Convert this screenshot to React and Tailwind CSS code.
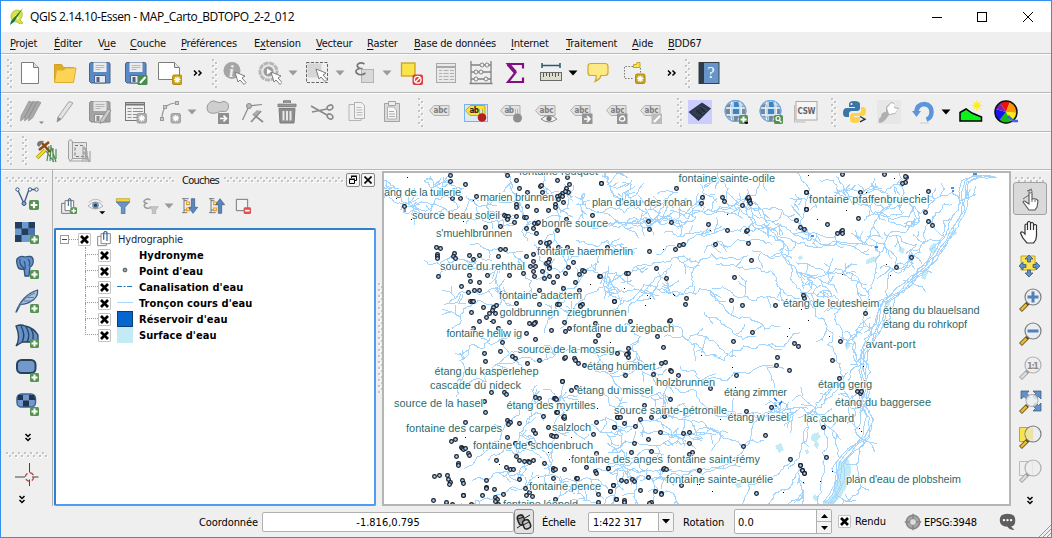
import React from "react";

/* ---------- map data ---------- */

// Spring and water-point positions, stored per survey tile at three units per pixel.
const TILES = [
  { x: 380, y: 168, p: [210,21,212,39,255,50,383,23,410,36,480,56,485,52,417,60,443,74,288,84,218,92,240,92,531,36,561,28,567,50,560,60,663,47,488,73,548,76,566,72,556,70,532,84,540,82,535,94,546,86,549,102,72,114,410,110,410,119,441,114,470,126,504,126,526,110,526,119,636,141,372,141,379,146,385,146,383,153,410,146,432,147,438,147,404,164,360,174,315,177,462,165,471,165,474,162,438,180,459,180,470,195,531,186,558,154,480,222,500,225,507,222,168,237,180,240,171,258,171,264,171,271,222,255,220,264,225,272,267,261,297,261,281,273,361,243,377,243,354,264,438,264,459,258,450,294,461,279,465,294,459,309,462,324,486,309,500,287,508,274,506,284,507,298,507,302,504,238,536,237,563,237,564,297,579,282,555,315,597,318,606,306,613,309,681,237,174,324,267,321,321,321,270,339,297,342,387,321,429,315,243,354,264,372,282,366,297,366,492,330,507,324,531,324,519,342,477,366,549,360,585,342,597,366,657,324,660,324,270,399,276,401,281,399,408,406,477,408,531,408,537,408,602,411,606,410,600,416,702,399,309,417,348,411,339,417,336,426,345,435,327,435,318,447,273,432,297,459,339,459,354,480,387,462,447,465,459,470,465,463,462,465,552,462,513,486,555,490,567,480,645,465,654,501,438,495,279,480] },
  { x: 600, y: 168, p: [3,47,228,60,306,87,303,105,366,87,372,99,426,111,441,91,447,94,444,87,449,99,452,107,144,159,213,162,147,183,324,168,381,186,438,189,441,186,588,156,600,177,612,183,618,72,618,123,345,228,225,243,237,231,249,228,147,249,444,225,453,276,168,300,198,330,402,327,78,315,84,315,42,399,258,390,255,408,393,396,426,411,525,411,609,381,612,392,90,459,208,459,210,456,171,504,456,492] },
  { x: 800, y: 168, p: [126,18,252,18,318,28,316,25,315,42,306,45,384,69,18,72,180,72,18,123,375,132,384,159,396,171,174,150,81,168,111,195,123,189,126,186,128,195,333,267,288,297,195,435] },
  { x: 380, y: 338, p: [366,12,312,45,360,39,315,69,397,54,405,60,441,77,477,66,465,3,645,9,552,60,555,57,583,60,587,66,594,75,613,81,546,131,548,131,573,156,588,147,333,162,372,162,380,168,465,177,477,180,522,180,527,182,530,184,312,189,315,222,530,222,531,222,489,234,551,238,554,242,552,235,255,252,381,246,387,252,392,252,384,260,417,255,504,267,461,276,465,285,515,292,519,294,528,294,381,297,648,252,702,267,639,288,213,309,225,303,243,327,246,330,249,333,255,330,264,345,269,351,405,315,450,315,228,354,408,354,348,366,417,366,432,369,444,369,459,366,447,372,492,375,648,345,234,375,234,381,378,387,392,393,399,393,519,390,519,396,525,393,552,393,618,387,645,399,648,405,684,390,162,414,177,411,201,411,204,423,212,432,207,438,246,426,249,435,318,426,320,447,318,450,342,453,417,423,519,420,588,420,591,420,699,441,690,459,249,471,250,472,306,471,369,468,435,450,447,462,438,471,456,474,345,477,351,483,345,489,354,498,159,486,198,492,216,498,273,498,525,483,654,468,654,492,708,483,711,237] },
  { x: 600, y: 338, p: [84,30,84,45,82,50,84,58,78,48,189,27,51,45,183,75,195,72,210,96,213,101,234,111,75,111,159,108,399,9,582,15,594,24,531,57,528,81,567,96,408,111,330,150,210,183,132,201,438,219,513,207,51,237,60,237,120,243,153,237,192,234,72,255,42,267,105,264,180,282,249,285,267,282,144,303,102,315,267,315,495,291,429,324,93,342,153,339,276,342,267,348,24,390,190,393,194,392,198,393,297,396,144,417,63,426,78,429,98,424,102,429,39,441,30,459,120,456,165,459,183,466,185,470,243,441,468,465,570,363,600,381,606,396,612,405,48,483,72,486,72,493,153,492,148,495] },
  { x: 800, y: 338, p: [120,9,96,66,117,120,172,160,180,165,183,160,69,267,78,357,0,381,6,396,12,405] },
];

const SPECKS = [407,177,396,198,473,200,411,219,484,226,489,219,463,221,550,209,648,229,663,249,710,230,727,214,808,175,866,192,894,178,919,194,846,210,817,219,590,284,624,288,647,295,673,294,674,295,645,305,650,298,801,309,808,320,829,336,789,328,787,336,842,274,886,264,890,275,863,366,859,428,861,431,832,471,712,491,820,481,701,355,732,367,735,387,750,422,720,419,626,367,590,389,597,408,571,437,548,452,499,464,538,477,465,437,513,401,610,342,803,482,783,492,697,484,699,484,569,459,490,321,498,330];

const LABELS = [
  ["fontaine rouquet",519,175,79],["ang de la tuilerie",384,196,77],["marien brunnen",480,200.5,74],["plan d'eau des rohan",592,205.5,100],
  ["source beau soleil",412,219,88],["bonne source",541.5,227,66.5],["s'muehlbrunnen",436,236.5,76],["fontaine haemmerlin",537,255,96],
  ["source du rehthal",440,270,85],["fontaine adactem",499,299,83],["goldbrunnen",499.5,316,59.5],["ziegbrunnen",567,316,59.5],
  ["fontaine du ziegbach",573,331.5,101],["fontaine hellw ig",446.5,337,75.5],["fontaine sainte-odile",678.5,181.5,96.5],
  ["fontaine pfaffenbruechel",809,202.5,120.5],["étang de leutesheim",783,307,96.5],["étang du blauelsand",883,313.5,96.5],
  ["étang du rohrkopf",883,328,84],["avant-port",865.5,347.5,50],["source de la mossig",517.5,352.5,97],["étang humbert",587,369.5,68.5],
  ["étang du kasperlehep",434.5,374.5,104],["cascade du nideck",430,388.5,91],["étang du missel",577,394,76],["source de la hasel",394,406.5,89],
  ["étang des myrtilles",506.5,409,89],["source sainte-pétronille",614,413.5,113],["holzbrunnen",656,386,59],["étang zimmer",724,396,63],
  ["étang w iesel",727.5,420.5,61.5],["lac achard",804,421.5,50],["étang gerig",818,387.5,54],["étang du baggersee",835,406,96],
  ["plan d'eau de plobsheim",846,482.5,115],["fontaine des carpes",406,432,96],["salzloch",552,431,39],["fontaine de schoenbruch",473,449,120],
  ["fontaine des anges",571,463,92],["fontaine saint-rémy",667,463,93],["fontaine sainte-aurélie",666,482.5,107],["fontaine pence",529,489.5,72],
  ["fontaine léopold",503,507.5,75],
];

// Number of tributaries followed by the course, at 2.5 units per pixel from the map's corner.
const STREAMS = [
  [4,0,62,30,75,55,85,90,75,120,85,150,60,170,45,200,40],
  [4,0,20,25,35,45,60,50,100],
  [4,50,100,90,105,130,100,170,95,190,85],
  [3,100,20,140,40,165,30,200,40],
  [4,205,60,230,80,260,90,300,100,330,110],
  [4,205,130,240,110,280,120,300,140],
  [4,300,0,320,30,335,60,345,100,350,140,360,170],
  [4,410,0,400,40,430,70,440,110,430,140,420,175],
  [4,450,30,470,60,460,90,440,100],
  [4,550,0,560,30,575,60,600,75],
  [4,620,20,600,50,620,70,660,70],
  [5,480,80,520,95,560,90,600,100,640,85],
  [5,520,140,560,128,600,130,640,120,690,125,720,118,760,115,800,100,850,92,905,90],
  [5,530,135,580,120,620,125,670,130,700,115,750,105,790,95],
  [4,600,135,640,132,670,118,700,110,740,120,780,108],
  [3,560,132,620,114,660,122,700,130,760,118],
  [3,735,50,700,70,690,100,680,120],
  [3,790,30,800,60,795,95],
  [3,800,100,840,85,880,95,905,85],
  [3,835,0,860,40,850,75,880,90],
  [3,960,0,940,30,910,60,905,90],
  [4,905,90,950,90,1000,105,1040,130,1100,160,1150,180,1200,180,1240,200],
  [4,905,90,930,130,970,140,1010,165,1050,175,1110,180,1150,185],
  [4,920,100,960,120,1000,135,1040,160,1080,170,1200,175],
  [4,910,110,950,150,980,170,1010,190,1020,240,1045,300,1080,360,1120,400],
  [2,950,130,1000,180,1030,240,1050,290],
  [2,100,220,150,220,200,218,215,225,270,220],
  [3,140,255,180,235,220,240,280,235,290,250],
  [4,215,180,250,190,300,195,340,215,350,250,370,300],
  [4,150,330,190,300,230,300,270,290,310,300],
  [4,170,390,200,340,240,320,290,330,320,300],
  [5,180,560,200,500,190,470,220,430,250,440,270,400],
  [4,375,180,400,230,440,250,470,210,500,190],
  [4,400,400,430,340,440,300,470,290,500,250],
  [4,440,390,480,330,520,300,560,290,600,300],
  [4,500,240,540,260,580,250,620,270],
  [3,480,170,520,180,560,170,600,180],
  [5,560,350,600,320,650,280,680,290,720,300],
  [4,590,260,630,235,690,225,740,210,800,215],
  [3,610,350,640,310,680,290,730,310,760,290,770,250,790,220,850,215,900,210],
  [4,560,310,600,300,650,300,690,260,720,230],
  [3,680,205,740,185,800,160,850,140,900,135,950,140],
  [2,700,150,740,160,800,150],
  [2,800,200,860,185,910,175,970,180],
  [2,920,195,980,210,1020,215],
  [2,830,230,880,235,940,240,980,270,1000,300,1040,315],
  [2,820,290,870,300,930,320,990,320],
  [4,750,300,790,290,830,320,860,350,920,370,990,385],
  [3,720,380,760,420,800,450,850,470,920,440,1000,435,1040,400],
  [2,800,350,840,370,870,400,930,410],
  [3,700,410,760,420,840,440,880,460],
  [2,740,485,780,500,800,520,840,515,880,500,1000,490],
  [2,690,520,730,540,780,545,820,590,880,600],
  [4,700,600,760,595,820,600,900,605,970,590,1010,600,1070,605,1120,590],
  [4,960,600,985,575,1010,590,1030,600,1000,605],
  [3,640,650,720,660,780,650,850,665,900,690,950,670],
  [4,700,610,760,620,810,640,860,650],
  [3,690,655,740,665,800,655,850,660],
  [3,580,690,640,680,720,680,780,690],
  [4,530,740,600,745,650,760,700,765,760,755,830,740,870,720,900,690,920,640,960,600,1000,590],
  [3,560,730,620,725,680,745,740,745,800,740,850,735],
  [4,580,745,600,735,640,750,660,740],
  [2,600,750,580,790,575,830],
  [2,640,760,625,810,620,860],
  [2,670,770,700,800,740,830],
  [4,540,620,600,640,650,620,700,640],
  [4,460,640,520,630,560,650,620,640],
  [3,560,700,620,715,700,705],
  [4,380,470,430,450,500,440,540,460,600,450],
  [3,600,380,640,410,620,440,640,470,600,480],
  [4,250,540,280,480,330,470,360,500],
  [4,500,480,540,500,600,500,680,490,700,470],
  [4,390,590,440,560,500,550,560,560,600,590],
  [3,620,540,650,560,690,550,720,570],
  [4,200,740,260,680,310,620,350,580,390,560],
  [4,330,700,340,650,380,600,400,620],
  [5,400,740,420,690,430,640,450,600,430,560],
  [3,260,720,300,690,340,700,400,680],
  [5,90,960,140,940,190,950,230,930,280,940,330,910],
  [4,95,995,150,980,200,985,260,970,300,990],
  [5,150,890,190,870,240,860,300,870,350,860,410,865,470,880],
  [5,200,1000,240,940,260,900,280,870],
  [5,330,1000,350,940,370,900,400,860,430,820,440,760],
  [4,180,830,230,820,300,800,360,780,400,760],
  [4,220,770,280,750,310,750,340,770],
  [4,430,1000,450,950,480,910,500,880,560,860],
  [4,520,1000,560,950,620,920,660,900,690,890],
  [4,600,960,650,950,690,970,780,1000],
  [3,480,780,500,820,540,840,600,840],
  [4,390,760,440,770,500,765,560,790],
  [3,1020,720,1000,740,950,760,900,820,850,850,820,880,800,930],
  [3,1040,740,1020,780,980,800,940,840,900,860,860,900,840,1000],
  [1,820,920,815,1000],[1,835,920,833,1000],[1,852,900,848,1000],[1,870,880,860,1000],[1,900,900,880,960,875,1000],
  [4,820,910,870,890,920,880,960,850],
  [3,1040,770,1050,800,1020,820,1000,850,1010,880,970,900,950,960,930,1000],
  [3,1000,870,980,920,985,960,960,1000],
  [3,1050,800,1040,860,1050,900,1030,950,1040,1000],
  [0,1095,610,1096,700,1093,800,1085,900,1070,1000],
  [2,1060,610,1060,660,1040,700,1010,740],
  [4,1100,620,1130,680,1120,740,1130,800,1110,860,1120,920,1100,980],
  [4,1130,750,1180,730,1190,790,1150,820,1130,870,1140,920],
  [3,1080,960,1100,930,1120,950,1110,990,1070,990],
  [1,1200,560,1180,600,1185,640,1150,620,1170,560,1200,540],
  [2,1120,400,1110,430,1130,470,1150,510,1120,560,1080,590,1060,610],
  [2,1160,500,1120,540,1090,570,1060,600],
  [2,1200,540,1190,600,1200,680,1180,730],
  [3,1240,400,1200,430,1210,480,1180,540,1190,600],
  [3,1150,400,1180,430,1200,480,1160,520],
  [3,1030,0,1060,60,1050,110,1030,145],
  [5,1090,20,1130,30,1150,60,1200,55,1250,50,1290,30],
  [5,1130,10,1150,50,1200,80,1260,110,1300,100],
  [4,1220,60,1250,90,1310,70,1340,100],
  [5,1290,0,1300,50,1270,90,1230,120,1210,160,1200,180],
  [5,1200,120,1240,100,1290,130,1330,130],
  [5,1380,40,1360,90,1330,130,1300,150,1260,160,1240,200,1230,250,1210,300,1200,360,1180,410],
  [3,1420,80,1380,100,1350,150,1340,200,1300,230,1260,280,1240,340,1200,400],
  [2,1360,60,1420,50,1440,80],
  [5,1430,100,1400,120,1390,170,1360,220,1330,260,1300,300,1270,340,1250,380],
  [4,1250,150,1290,160,1330,180,1320,230,1280,250,1240,240],
  [4,1030,225,1080,240,1130,250,1180,270,1210,300],
  [4,1040,250,1090,260,1130,240,1180,250],
  [4,1040,300,1090,310,1140,340,1180,330],
  [2,1100,300,1140,330,1130,380,1150,420],
];

const RHINE = [995,177,978,178,966,184,964,215,952,243,938,260,932,280,916,300,892,319,881,329,880,350,870,367,864,396,868,420,864,450,872,475,868,490,852,506,844,522,842,540,832,560];
const RHINE_COURSE = [995,177,978,177,967,182,964,211,953,231,943,248,927,268,913,281,897,295,885,302,882,321,876,335,866,352,864,372,868,390,864,405,872,418,868,437,853,450,842,463,840,486,828,504];

const PONDS = [
  "M838 462l10-3 3 8-1 14-8 14-8 9h-12l10-8 5-18z",
  "M930 246l4-4 3 7-4 5-4-3z", "M866 260l8-4-2 7-6 1z", "M950 232l6-2 1 4-6 2z", "M900 246l5 3-2 5-5-3z",
  "M871 258l8-2-3 6-8 1z", "M812 434l6-2 3 5-6 5-4-2z", "M775 446l6-3 3 7-5 3z", "M815 440l4 3-1 6-4-3z",
  "M845 343l4-2 1 6-4 3z", "M805 450l3-1 1 4-3 1z", "M814 494l5 4-3 4-3-3z", "M798 257l4-2 1 4-4 1z",
  "M735 484l5-2 2 5-5 1z", "M925 268l4 2-4 10-4-2z", "M886 301l6-2-3 7-4-1z", "M812 434l4 2-1 4-4-1z",
];

function random(seed) {
  let s = seed;
  return () => {
    s = (s * 1664525 + 1013904223) % 4294967296;
    return s / 4294967296;
  };
}

function meander(pts, rnd, wobble) {
  let line = pts;
  for (let pass = 0; pass < 3; pass++) {
    const next = [line[0]];
    for (let i = 1; i < line.length; i++) {
      const [ax, ay] = line[i - 1];
      const [bx, by] = line[i];
      const off = (rnd() - 0.5) * wobble;
      next.push([(ax + bx) / 2 - (by - ay) * off, (ay + by) / 2 + (bx - ax) * off], [bx, by]);
    }
    line = next;
  }
  return line;
}

const toPath = (line) => "M" + line.map(([x, y]) => x.toFixed(1) + " " + y.toFixed(1)).join("L");

const pairs = (flat) => {
  const out = [];
  for (let i = 0; i < flat.length; i += 2) out.push([flat[i], flat[i + 1]]);
  return out;
};

function branch(x, y, angle, length, rnd, depth, out) {
  const line = [[x, y]];
  let a = angle;
  let cx = x;
  let cy = y;
  const steps = Math.max(3, Math.round(length / 2.5));
  for (let i = 0; i < steps; i++) {
    a += (rnd() - 0.5) * 0.8;
    cx += Math.cos(a) * 2.5;
    cy += Math.sin(a) * 2.5;
    line.push([cx, cy]);
    if (depth > 0 && rnd() < 0.18) branch(cx, cy, a + (rnd() < 0.5 ? -0.9 : 0.9), length * 0.5, rnd, depth - 1, out);
  }
  out.push(toPath(line));
}

function buildRivers() {
  const rnd = random(67);
  const out = [];
  STREAMS.forEach(([count, ...flat]) => {
    const course = pairs(flat).map(([x, y]) => [384 + x / 2.5, 172.500 + y / 2.500]);
    const line = meander(course, rnd, 0.5);
    out.push(toPath(line));
    for (let i = 0; i < count; i++) {
      const k = 1 + Math.floor(rnd() * (line.length - 2));
      const [x, y] = line[k];
      const dir = Math.atan2(line[k + 1][1] - y, line[k + 1][0] - x);
      branch(x, y, dir + (rnd() < 0.5 ? -1.1 : 1.1), 7 + rnd() * 13, rnd, 1, out);
    }
  });
  const rhine = pairs(RHINE_COURSE);
  [-5, -2.500, 0, 1.500].forEach((shift) => {
    out.push(toPath(meander(rhine.map(([x, y]) => [x + shift, y + shift * 0.3]), rnd, 0.2)));
  });
  return out.join("");
}

const RIVERS = buildRivers();
const POINTS = TILES.flatMap((t) => pairs(t.p).map(([x, y]) => [t.x + Math.floor(x / 3) + 0.5, t.y + Math.floor(y / 3) + 0.5]));

function MapCanvas() {
  return (
    <svg className="block h-[332px] w-[626px] bg-white" viewBox="384 173 626 332">
      <g fill="#c3ebf5" shapeRendering="crispEdges">{PONDS.map((d) => <path key={d} d={d} />)}</g>
      <path d={RIVERS} fill="none" stroke="#a3d5ff" strokeWidth="1" shapeRendering="crispEdges" />
      <path d="M774 398l3 3m2 4l3-4m-7 5h2M811 236h3M951 188h3m-2 3h2M875 247h3M973 174h4M405 209v3" fill="none" stroke="#0a6ad8" strokeWidth="1.3" />
      <g fill="#000" shapeRendering="crispEdges">{pairs(SPECKS).map(([x, y], i) => <rect key={i} x={x} y={y} width="1" height="1" />)}</g>
      <g fill="#a9d4fb" stroke="#161b26" strokeWidth="1.25">{POINTS.map(([x, y], i) => <circle key={i} cx={x} cy={y} r="1.85" />)}</g>
      <g className="font-['Liberation_Sans',sans-serif] text-[11px]" fill="#2c6a6c" stroke="#fff" strokeWidth="1.6" paintOrder="stroke" strokeLinejoin="round">
        {LABELS.map(([name, x, y, w]) => <text key={name} x={x} y={y} textLength={w}>{name}</text>)}
      </g>
    </svg>
  );
}

/* ---------- small parts ---------- */

function Grip({ length, horizontal = false, className = "" }) {
  const dots = [];
  for (let p = 0; p + 2 <= length; p += 3) dots.push([p, (p / 3) % 2 ? 3 : 0]);
  const w = horizontal ? length : 6;
  const h = horizontal ? 6 : length;
  return (
    <svg className={"block shrink-0 " + className} width={w} height={h} shapeRendering="crispEdges">
      {dots.map(([p, q]) => {
        const x = horizontal ? p : q;
        const y = horizontal ? q : p;
        return (
          <g key={p}>
            <rect x={x + 1} y={y + 1} width="2" height="2" fill="#fff" />
            <rect x={x} y={y} width="1.5" height="1.5" fill="#c4c4c4" />
          </g>
        );
      })}
    </svg>
  );
}

const Icon = ({ className = "", children, size = 24 }) => (
  <svg className={"block shrink-0 " + className} width={size} height={size} viewBox="0 0 24 24" fill="none">{children}</svg>
);

const Arrow = ({ className = "", color = "#000" }) => (
  <svg className={"block shrink-0 " + className} width="10" height="6" viewBox="0 0 10 6"><path d="M0.5 0.5h9L5 5.5z" fill={color} /></svg>
);

const More = ({ className = "" }) => (
  <svg className={"block shrink-0 " + className} width="10" height="8" viewBox="0 0 10 8" fill="none" stroke="#000" strokeWidth="1.5"><path d="M1 1.500l2.500 2.500-2.500 2.500M5.500 1.500l2.500 2.500-2.500 2.500" /></svg>
);

const MoreDown = ({ className = "" }) => (
  <svg className={"block shrink-0 " + className} width="8" height="9" viewBox="0 0 8 9" fill="none" stroke="#000" strokeWidth="1.5"><path d="M1.500 1L4 3.500 6.500 1M1.500 5L4 7.500 6.500 5" /></svg>
);

const Star = ({ x, y, fill, stroke }) => (
  <g transform={`translate(${x} ${y})`}>
    <rect x="0.5" y="0.5" width="9.500" height="9.500" rx="1.500" fill={fill} stroke={stroke} />
    <path d="M5.200 2v6.500M2 5.200h6.500M3 3l4.500 4.500M7.500 3L3 7.500" stroke="#fff" strokeWidth="1.200" />
  </g>
);

const Plus = ({ x, y, s = 9 }) => (
  <g transform={`translate(${x} ${y}) scale(${s / 9})`}>
    <rect width="9" height="9" rx="1.500" fill="#589253" />
    <path d="M4.500 1.500v6M1.500 4.500h6" stroke="#fff" strokeWidth="2" />
  </g>
);

const Pointer = ({ x = 0, y = 0 }) => (
  <path transform={`translate(${x} ${y})`} d="M0 0l3 10 2-2 4 4.500 2-2-4-4.500 3-2z" fill="#fff" stroke="#7c7c7c" />
);

const Tag = ({ text = "abc", fill = "#e2e2e2", stroke = "#b0b0b0", color = "#7c7c7c" }) => (
  <>
    <path d="M6 5.500h15v10H6L1.500 10.500z" fill={fill} stroke={stroke} />
    <text x="5.500" y="12.500" fill={color} className="font-['DejaVu_Sans_Condensed','DejaVu_Sans',sans-serif] text-[8px] font-bold" textLength={text.length * 4.7}>{text}</text>
  </>
);

const Disk = ({ body, label, edge }) => (
  <>
    <path d="M2.500 1.500h18q1.500 0 1.500 1.500v19h-19l-1.500-1.500V2.500z" fill={body} stroke={edge} />
    <path d="M5.500 1.500h13V11h-13z" fill={label} />
    <path d="M7.500 4.500h9M7.500 6.500h9M7.500 8.500h5" stroke="#aaa" strokeWidth=".8" />
    <path d="M6.500 14.500h11V22h-11z" fill="#e8e8e8" stroke={edge} />
    <path d="M8.500 16h3v5h-3z" fill={edge} />
  </>
);

const Globe = () => (
  <>
    <circle cx="11.500" cy="11" r="11" fill="#6ea6dc" />
    <circle cx="11.500" cy="11" r="10" fill="#b9d3ea" />
    <path d="M3 5l5-2v4H2zM10 2h4l1 5h-5zM16 4l4 3h-3zM1 9h6v5H2zM9 9h6v5H9zM17 9h4v5h-4zM3 16h5l1 4zM10 16h5l-2 5h-3zM17 16h3l-3 4z" fill="#7b8794" />
    <path d="M10 2h4l1 5h-5zM9 9h6v5H9z" fill="#3d84c6" />
    <path d="M2 8h19M2 15h19M8 1q-3 10 0 20M16 1q3 10 0 20" stroke="#e7f1fa" strokeWidth="1.200" />
    <circle cx="11.500" cy="11" r="10.500" stroke="#6ea6dc" />
  </>
);

const Lens = ({ grey = false, children }) => (
  <>
    {children}
    <path d="M10 15L2.500 22.500" stroke={grey ? "#999" : "#5b4a17"} strokeWidth="4" />
    <path d="M8.500 16.500L3 22" stroke={grey ? "#dcdcdc" : "#eab92e"} strokeWidth="2.500" />
    <circle cx="15" cy="9" r="8" fill={grey ? "#eeeeee" : "#e9eef0"} fillOpacity="0.8" stroke={grey ? "#b0b0b0" : "#7d7d7d"} strokeWidth="1.200" />
  </>
);

/* ---------- toolbars ---------- */

function FileToolbar() {
  return (
    <div className="flex h-[39px] items-center border-t border-[#b8b8b8] shadow-[inset_0_1px_0_#fff]">
      <Grip length={29} className="ml-[6px]" />
      <Icon className="ml-[5px]"><path d="M3.500 1.500h12l5 5v16h-17z" fill="#fff" stroke="#7d7d7d" /><path d="M15.500 1.500v5h5" fill="#ddd" stroke="#7d7d7d" /></Icon>
      <Icon className="ml-[11px]"><path d="M1.500 21V3.500h7l2 3h10V10" fill="#e0ac22" stroke="#d2a022" /><path d="M1.500 21.500L3.500 9h7l2-2h10.500l-2.500 14.500z" fill="#fbd455" stroke="#dcae33" /></Icon>
      <Icon className="ml-[11px]"><Disk body="#5a8ac6" label="#ececec" edge="#49648c" /></Icon>
      <Icon className="ml-[12px]"><Disk body="#5a8ac6" label="#ececec" edge="#49648c" /><rect x="13.500" y="14" width="10" height="10" rx="1.500" fill="#4a8c4c" /><path d="M16 22l5.500-6" stroke="#fff" strokeWidth="2" /></Icon>
      <Icon className="ml-[10px]"><path d="M.5 1.500h16l5 5v12H.5z" fill="#fff" stroke="#7d7d7d" /><path d="M16.500 1.500v5h5" fill="#e4e4e4" stroke="#7d7d7d" /><Star x={14} y={13.500} fill="#cba417" stroke="#b08d0f" /></Icon>
      <More className="ml-[11px]" />
      <Grip length={29} className="ml-[9px]" />
      <Icon className="ml-[5px]"><circle cx="9" cy="9.500" r="8.500" fill="#a5a5a5" /><text x="6" y="15.500" className="font-['Liberation_Serif',serif] text-[17px] font-bold italic" fill="#eee">i</text><Pointer x={12} y={11} /></Icon>
      <Icon className="ml-[11px]"><circle cx="10.500" cy="10.500" r="8.500" fill="#e2e2e2" stroke="#b5b5b5" strokeWidth="3" strokeDasharray="5 .8" /><circle cx="10.500" cy="10.500" r="7" fill="#e6e6e6" /><circle cx="10.500" cy="10.500" r="5" fill="#9c9c9c" /><path d="M9 7.500l5 3-5 3z" fill="#fff" /><Pointer x={13} y={11} /></Icon>
      <Arrow className="ml-[6px]" color="#9a9a9a" />
      <Icon className="ml-[7px]"><rect x="2.500" y="2.500" width="14" height="14" fill="#d6d6d6" /><rect x="1.500" y="1.500" width="21" height="20" stroke="#666" strokeDasharray="3 1.500" /><Pointer x={11} y={8} /></Icon>
      <Arrow className="ml-[6px]" color="#9a9a9a" />
      <Icon className="ml-[8px]"><rect x="8.500" y="8.500" width="12" height="13" fill="#d9d9d9" stroke="#b3b3b3" /><path d="M11.500 3Q8 .8 5 3q-2 2 1.500 4.500Q1.500 9 3.500 12q4 3.500 9 0M6.500 7.500h3" stroke="#777" strokeWidth="1.700" /></Icon>
      <Arrow className="ml-[5px]" color="#9a9a9a" />
      <Icon className="ml-[8px]"><rect x="1.500" y="2" width="13.500" height="13" fill="#fbe34c" stroke="#c6a51c" strokeWidth="1.300" /><rect x="12.500" y="13.500" width="10.500" height="10.500" rx="2" fill="#dd3c3c" /><circle cx="17.700" cy="18.700" r="3.300" stroke="#fff" strokeWidth="1.300" /><path d="M15.500 21l4.500-4.500" stroke="#fff" strokeWidth="1.300" /></Icon>
      <Icon className="ml-[10px]"><rect x="2.500" y="2.500" width="19" height="19" fill="#e9e9e9" stroke="#a8a8a8" /><path d="M3 5h18v2H3z" fill="#a8a8a8" /><path d="M5 9.500h3M9.500 9.500h5M16 9.500h4M5 12.500h3M9.500 12.500h5M16 12.500h4M5 15.500h3M9.500 15.500h5M16 15.500h4M5 18.500h3M9.500 18.500h5M16 18.500h4" stroke="#b1b1b1" /></Icon>
      <Icon className="ml-[11px]"><path d="M2 0v22M22 0v22M2 4h20M2 11h20M2 18h20M.5 22.500h23" stroke="#828282" strokeWidth="1.300" /><g fill="#efefef" stroke="#828282"><circle cx="13" cy="4" r="2" /><circle cx="18" cy="4" r="2" /><circle cx="7" cy="11" r="2" /><circle cx="12" cy="11" r="2" /><circle cx="7" cy="18" r="2" /><circle cx="17" cy="18" r="2" /></g></Icon>
      <Icon className="ml-[10px]"><path d="M20 7.500V3H5l7.500 8.500L5 21h15v-4.500" stroke="#840f84" strokeWidth="2.200" /><path d="M5 3l7.500 8.500" stroke="#840f84" strokeWidth="3.500" /></Icon>
      <Icon className="ml-[12px]"><path d="M3 4.500h18M3 2v5M21 2v5" stroke="#2b5878" strokeWidth="1.500" /><rect x="1.500" y="11.500" width="21" height="8" fill="#dcdccf" stroke="#696969" /><path d="M4.500 12v4M7.500 12v3M10.500 12v4M13.500 12v3M16.500 12v4M19.500 12v3" stroke="#555" /></Icon>
      <Arrow className="ml-[5px]" />
      <Icon className="ml-[8px]"><path d="M5 2.500h14q3 0 3 3v6q0 3-3 3h-4q-1 4-6 6 2-3 1-6H5q-3 0-3-3v-6q0-3 3-3z" fill="#fdea85" stroke="#cca830" strokeWidth="1.200" /></Icon>
      <Icon className="ml-[13px]"><path d="M10 5.500H1.500v12H11M17.500 7v6" stroke="#777" strokeDasharray="1.500 1.500" /><path d="M10.500 3.500h3l.5-2h3v5h-6.500z" fill="#fbe34c" stroke="#c6a51c" /><Star x={12} y={12.500} fill="#cba417" stroke="#b08d0f" /></Icon>
      <More className="ml-[20px]" />
      <Grip length={29} className="ml-[8px]" />
      <Icon className="ml-[6px]"><rect x="2" y="1.500" width="20" height="21" fill="#6795c9" stroke="#38424c" /><rect x="2" y="1.500" width="5" height="21" fill="#2d3c4a" /><text x="10.500" y="17" fill="#fff" className="font-['Liberation_Serif',serif] text-[16px]">?</text></Icon>
    </div>
  );
}

function EditToolbar() {
  return (
    <div className="flex h-[39px] items-center border-t border-[#b8b8b8] shadow-[inset_0_1px_0_#fff]">
      <Grip length={29} className="ml-[6px]" />
      <Icon className="ml-[7px]"><path d="M9 1l4 1.500L4.500 18 .5 21l.5-5zM13 1l4 1.500L8.500 18 4.500 21l.5-5zM17 1l4 1.500L12.500 18 8.500 21l.5-5z" fill="#a9a9a9" stroke="#8c8c8c" strokeWidth=".6" /><path d="M19 21.500h5l-2.500 2.500z" fill="#888" /></Icon>
      <Icon className="ml-[9px]"><path d="M16 1.500l4 1.500L8.500 19 4 22l1-5z" fill="#e2e2e2" stroke="#a5a5a5" /><path d="M4 22l1-5 3.500 2z" fill="#8d8d8d" /></Icon>
      <Icon className="ml-[11px]"><Disk body="#a3a3a3" label="#e5e5e5" edge="#8e8e8e" /><path d="M20 9l3 1.500-7 11-4 2 1-4z" fill="#c9c9c9" stroke="#888" strokeWidth=".8" /></Icon>
      <Icon className="ml-[12px]"><rect x="1.500" y="2.500" width="19" height="18" fill="#efefef" stroke="#777" /><path d="M2 4.500h18" stroke="#777" strokeWidth="2" /><path d="M3.500 8.500h4M9 8.500h10M3.500 11.500h4M9 11.500h10M3.500 14.500h4M9 14.500h10M3.500 17.500h4M9 17.500h10" stroke="#909090" /><Star x={12.500} y={13} fill="#acacac" stroke="#a0a0a0" /></Icon>
      <Icon className="ml-[10px]"><path d="M4 19Q4 3 19 3" stroke="#999" strokeWidth="1.200" /><g fill="#ccc" stroke="#999"><rect x="2.500" y="17.500" width="3" height="3" /><rect x="5.500" y="5.500" width="3" height="3" /><rect x="17.500" y="1.500" width="3" height="3" /></g><Star x={12.500} y={13} fill="#acacac" stroke="#a0a0a0" /></Icon>
      <Arrow className="ml-[5px]" color="#9a9a9a" />
      <Icon className="ml-[9px]"><path d="M5 1.500q3-1.500 6 .5 3 1.500 6-.5 5 0 5.500 4 0 6-4 6-4-1-7 1-6 2-9.500-1-3-6 3-10z" fill="#cecece" stroke="#999" /><rect x="12" y="13" width="11" height="11" fill="#8f8f8f" /><path d="M14 18.500h6M17.500 15.500l3 3-3 3" stroke="#fff" strokeWidth="1.700" /></Icon>
      <Icon className="ml-[11px]"><path d="M1.500 20L8 6l13-1.500" stroke="#888" strokeWidth="1.200" /><circle cx="8" cy="6" r="2.500" fill="#b9b9b9" stroke="#888" /><path d="M12 14l10 8M20 11L10 22" stroke="#8c8c8c" strokeWidth="1.800" /><path d="M12 14l4-4 3 1-5 5z" fill="#aaa" /></Icon>
      <Icon className="ml-[10px]"><path d="M8.500 3V.8h7V3M3 4.200h18v2.500H3z" fill="#9b9b9b" stroke="#7c7c7c" /><path d="M4 8.500h16l-1 14.500H5z" fill="#8d8d8d" stroke="#7c7c7c" /><path d="M8.500 11v9.500M12 11v9.500M15.500 11v9.500" stroke="#e9e9e9" strokeWidth="2" /></Icon>
      <Icon className="ml-[11px]"><path d="M1 6l16 9M2 12l15-3" stroke="#8a8a8a" strokeWidth="1.700" /><ellipse cx="20" cy="7.500" rx="3" ry="2.300" stroke="#8a8a8a" strokeWidth="1.600" transform="rotate(-25 20 7.500)" /><ellipse cx="20" cy="16.500" rx="3" ry="2.300" stroke="#8a8a8a" strokeWidth="1.600" transform="rotate(35 20 16.500)" /></Icon>
      <Icon className="ml-[11px]"><path d="M4 4.500h9l3 3v13H4z" fill="#eee" stroke="#b5b5b5" /><path d="M9.500 2.500h7l3 3v13h-10z" fill="#f2f2f2" stroke="#b0b0b0" /><path d="M11.500 7.500h5M11.500 10h6M11.500 12.500h6M11.500 15h6" stroke="#b9b9b9" /></Icon>
      <Icon className="ml-[11px]"><path d="M4.500 3.500h15v18h-15z" fill="#dadada" stroke="#a3a3a3" /><path d="M8.500 1.500h7v4h-7z" fill="#eee" stroke="#a3a3a3" /><path d="M7.500 7h6l3 3v9h-9z" fill="#f7f7f7" stroke="#b0b0b0" /><path d="M9 11.500h5M9 14h6M9 16.500h6" stroke="#aaa" /></Icon>
      <Grip length={29} className="ml-[14px]" />
      <Icon className="ml-[4px]"><Tag /></Icon>
      <Icon className="ml-[12px]"><rect x=".5" y="4.500" width="23" height="17" fill="#dceaf8" stroke="#79b3ec" /><Tag text="ab" fill="#f8e23c" stroke="#c8a615" color="#222" /><path d="M17 9v6" stroke="#777" strokeWidth="3" /><path d="M17 9v6" stroke="#fff" strokeWidth="1.500" /><circle cx="18" cy="17.500" r="4.300" fill="#b32020" /></Icon>
      <Icon className="ml-[11px]"><Tag text="ab" /><path d="M17.500 9v6" stroke="#aaa" strokeWidth="3" /><path d="M17.500 9v6" stroke="#eee" strokeWidth="1.300" /><circle cx="18.500" cy="18" r="4.500" fill="#8f8f8f" /></Icon>
      <Icon className="ml-[11px]"><Tag /><path d="M7 19q8-7 16 0-8 6-16 0z" fill="#f5f5f5" stroke="#8c8c8c" /><circle cx="15" cy="18.500" r="2.600" fill="#777" /></Icon>
      <Icon className="ml-[11px]"><Tag /><rect x="13" y="13.500" width="10.500" height="10.500" fill="#949494" /><path d="M15 19h5.500M18 16l3 3-3 3" stroke="#fff" strokeWidth="1.500" /></Icon>
      <Icon className="ml-[12px]"><Tag /><rect x="12" y="13.500" width="10.500" height="10.500" fill="#949494" /><path d="M19.500 17q-3-2-4.500 1t2 3 2.500-3-2-1" stroke="#fff" strokeWidth="1.300" /></Icon>
      <Icon className="ml-[10px]"><Tag /><rect x="12.500" y="13.500" width="10.500" height="10.500" fill="#bbb" /><path d="M15 22l6-6" stroke="#fff" strokeWidth="2" /></Icon>
      <Grip length={29} className="ml-[14px]" />
      <Icon className="ml-[5px]"><path d="M0 0h24v24H0z" fill="#ccccff" /><path d="M.5 12L14 2.500l9 6L10.500 21z" fill="#2b3648" /><path d="M5 12l8-6 6 4-8 6z" stroke="#3c4a60" /><path d="M8 10l6 5M12 7l5 5" stroke="#1a2230" /></Icon>
      <Icon className="ml-[12px]"><Globe /><Plus x={15} y={15} /><path d="M20 22h5l-2.500 2.500z" fill="#000" /></Icon>
      <Icon className="ml-[11px]"><Globe /><rect x="15" y="15" width="9" height="9" rx="1.500" fill="#589253" /><circle cx="19" cy="18.500" r="2" stroke="#fff" strokeWidth="1.200" /><path d="M20.500 20.500l2 2" stroke="#fff" strokeWidth="1.300" /></Icon>
      <Icon className="ml-[11px]"><path d="M.5 5v17h11" stroke="#bbb" /><rect x="2" y="1.500" width="21" height="18.500" fill="#f6f6f6" stroke="#aaa" /><text x="3.500" y="13.500" fill="#666" className="font-['DejaVu_Sans_Condensed','DejaVu_Sans',sans-serif] text-[8px] font-bold" textLength="18">CSW</text></Icon>
      <Grip length={29} className="ml-[13px]" />
      <Icon className="ml-[6px]"><path d="M11 1Q6 1 6 4v3h6v1H4q-4 0-4 5 0 4 3 4h3v-3q0-3 3-3h5q3 0 3-3V4q0-3-6-3z" fill="#3c76a8" /><path d="M12 23q5 0 5-3v-3h-6v-1h8q4 0 4-5 0-4-3-4h-2v3q0 3-3 3h-5q-3 0-3 3v4q0 3 5 3z" fill="#fcd34a" /><circle cx="8.500" cy="4" r="1" fill="#fff" /><path d="M17 16.500l5 2.700-5 2.700" stroke="#333" strokeWidth="1.400" /></Icon>
      <Icon className="ml-[10px]"><path d="M0 0h24v24H0z" fill="#e7e7e7" /><path d="M2 23q-1-5 2-6 0-5 5-5L9 7l5-5 3 1v4l5 1-4 6-6 1-3 4q-3 4-7 4z" fill="#b0b0b0" /><path d="M10 8l4-5 3 1v4l4 1-3 4-6 1z" fill="#fff" /></Icon>
      <Icon className="ml-[11px]"><path d="M4 13Q5 4 12.500 4q7 1 7 8 0 6-5 7.500" stroke="#5d95da" strokeWidth="4.500" /><path d="M0 11h9l-4.500 6z" fill="#5d95da" /><path d="M8 23h9" stroke="#ccc" /></Icon>
      <Arrow className="ml-[5px]" />
      <Icon className="ml-[8px]"><path d="M1 21V12.500l6-3.500 6 4 9.500 4V21z" fill="#0cf01c" stroke="#000" strokeWidth="1.500" /><circle cx="18" cy="5.500" r="3" fill="#ffee10" /><path d="M18 0v11M12.500 5.500h11M14 1.500l8 8M22 1.500l-8 8" stroke="#ffee10" /></Icon>
      <Icon className="ml-[11px]"><g transform="translate(12 12)"><path d="M0 0L-6-9A11 11 0 0 1 4-10.500z" fill="#f01010" /><path d="M0 0L4-10.500A11 11 0 0 1 11 1z" fill="#ff9800" /><path d="M0 0L11 1A11 11 0 0 1 5 10z" fill="#f7f000" /><path d="M0 0L5 10A11 11 0 0 1-7 9z" fill="#10c010" /><path d="M0 0L-7 9A11 11 0 0 1-10.500-3z" fill="#1616ee" /><path d="M0 0L-10.500-3A11 11 0 0 1-6-9z" fill="#7d1fb0" /></g><circle cx="12" cy="12" r="11" stroke="#111" strokeWidth="1.500" /><path d="M14 16l5 5h5" stroke="#3d66ee" strokeWidth="2.500" /></Icon>
    </div>
  );
}

function PluginToolbar() {
  return (
    <div className="flex h-[38px] items-center border-t border-[#b8b8b8] shadow-[inset_0_1px_0_#fff]">
      <Grip length={29} className="ml-[6px]" />
      <Grip length={29} className="ml-[9px]" />
      <Icon className="ml-[6px]"><path d="M13 22l2-15M16 22l1-16M19 23l0-14M22 23L17 8M22 20l0-10M12 12l8 11" stroke="#4c8a50" strokeWidth="1.200" /><path d="M5 11L15 3M8 4l8 9" stroke="#8b4a16" strokeWidth="2.600" /><path d="M3 6q0-5 7-4L5 8z" fill="#777" /><path d="M11 11L3 19" stroke="#a58e10" strokeWidth="3.500" /><path d="M11 11L3 19" stroke="#f0e020" strokeWidth="2.300" /></Icon>
      <Icon className="ml-[10px]"><path d="M4.500 3.500h14v16h-14z" fill="#e5e5e5" stroke="#a0a0a0" /><path d="M.5 2q3-3 4 1v17q-2 3-4 0zM1 22h14" stroke="#a0a0a0" fill="#e5e5e5" /><path d="M7 6.500h9v11H7z" stroke="#777" strokeDasharray="3 2" /><path d="M15 23V8M17 23l1-14M19 23V12M21 23l-4-14M22 23V12" stroke="#a4a4a4" strokeWidth="1.200" /></Icon>
    </div>
  );
}

/* ---------- left dock ---------- */

function LeftToolbar() {
  return (
    <div className="flex w-[52px] shrink-0 flex-col border-r border-[#b0b0b0] pl-[5px] pt-[7px]">
      <Grip length={42} horizontal />
      <div className="flex flex-col gap-[10.4px] pl-[9px] pt-[3px]">
        <Icon><path d="M2.500 3.500l6.500 14L14 3.500h7.500" stroke="#3d5a80" strokeWidth="1.300" /><g fill="#fff" stroke="#34567e"><circle cx="2.500" cy="3.500" r="1.700" /><circle cx="9" cy="17.500" r="2" fill="#7fa3cf" /><circle cx="15" cy="3.500" r="1.700" /><circle cx="21.500" cy="3.500" r="1.700" /></g><Plus x={14} y={14} s={10} /></Icon>
        <Icon><path d="M0 2h20v20H0z" fill="#6c9bd0" /><path d="M0 2h7v6.500H0zM13.500 2H20v6.500h-6.500zM6.500 8.500h7V15h-7zM0 15h6.500v7H0z" fill="#263e5e" /><path d="M13.500 8.500H20V15h-6.500z" fill="#4a76ac" /><Plus x={15} y={15} /></Icon>
        <Icon><path d="M2 4q3-4 8-2 7-2 8 2 1 6-3 8l-1 9h-4l-1-7q-5 1-6-2-2-5-1-8z" fill="#6592c8" stroke="#31527c" strokeWidth="1.300" /><path d="M5 4q-1 6 4 9M13 4q3 3 1 7M9 6q2 4 1 9" stroke="#31527c" strokeWidth="1.200" /><Plus x={15} y={15} /></Icon>
        <Icon><path d="M1 23Q7 6 22.500 1q1 7-6 11-4 3-11 3.500L1.500 23z" fill="#a9c0da" stroke="#3b5c86" strokeWidth="1.200" /><path d="M3 19Q9 8 20 4M9 12l7 0M12 8.500l7 0" stroke="#5c7ea8" /><Plus x={15} y={15} /></Icon>
        <Icon><path d="M1 2q5-2 9 0 9 2 13 9v7H8q-3 1-7 4 5-8 0-20z" fill="#6592c8" stroke="#27425f" strokeWidth="1.300" /><path d="M6 2q5 9 1 16M11 3q5 8 1 15M16 5q4 6 1 13" stroke="#27425f" strokeWidth="1.300" /><Plus x={15} y={15} /></Icon>
        <Icon><rect x="2" y="2" width="18.500" height="13" rx="4.500" fill="#7399cb" stroke="#27425f" strokeWidth="2" /><Plus x={15} y={15} /></Icon>
        <Icon><rect x="2" y="2" width="18.500" height="13" rx="4.500" fill="#7399cb" stroke="#3f6395" strokeWidth="1.500" /><path d="M3 3h5v5H2.500zM14 3h5l1.500 5H14zM8 8.500h6V14.500H8z" fill="#22354f" /><Plus x={15} y={15} /></Icon>
      </div>
      <MoreDown className="ml-[18px] mt-[17px]" />
      <Grip length={42} horizontal className="mt-[10px]" />
      <Icon className="ml-[9px] mt-[5px]"><path d="M14.500 0v10M14.500 17v6.500M0 14.500h10M17 14.500h6.500" stroke="#444" transform="translate(0 -.5)" /><circle cx="14.500" cy="14" r="4.200" stroke="#c44b4b" strokeWidth="1.500" strokeDasharray="4 2.600" /></Icon>
      <MoreDown className="ml-[12px] mt-[8px]" />
    </div>
  );
}

function Check() {
  return (
    <span className="flex h-[13px] w-[13px] shrink-0 items-center justify-center rounded-[1px] border border-[#c2c2c2] bg-white">
      <svg width="9" height="9" viewBox="0 0 9 9"><path d="M1 1l7 7M8 1L1 8" stroke="#000" strokeWidth="2.700" /></svg>
    </span>
  );
}

const LAYERS = [
  ["Hydronyme", null],
  ["Point d'eau", <circle key="s" cx="8" cy="7" r="1.900" fill="#8aa8bd" stroke="#555" />],
  ["Canalisation d'eau", <path key="s" d="M0 7.500h16" stroke="#1a78c8" strokeDasharray="5 1.500 2 1.500" />],
  ["Tronçon cours d'eau", <path key="s" d="M0 7.500h16" stroke="#a9d8fc" />],
  ["Réservoir d'eau", <rect key="s" x=".5" y=".5" width="15" height="15" fill="#0566cf" stroke="#0a3c77" />],
  ["Surface d'eau", <rect key="s" width="16" height="16" fill="#c3ebf5" />],
];

function LayersPanel() {
  return (
    <div className="flex w-[323px] shrink-0 flex-col pl-[1px]">
      <div className="flex h-[18px] items-center pt-[1px]">
        <Grip length={120} horizontal className="ml-[1px]" />
        <span className="ml-[7px] w-[42px] whitespace-nowrap pt-[2px] tracking-[-0.75px]">Couches</span>
        <Grip length={120} horizontal />
        <span className="ml-[2px] flex h-[14px] w-[14px] items-center justify-center rounded-[2px] border border-[#888] bg-[#f4f4f4]">
          <svg width="10" height="10" viewBox="0 0 10 10" fill="none" stroke="#000"><path d="M3.500 3V1.500h5v4H7M3 1h6" /><path d="M1.500 4.500h5v4h-5zM1 4h6" /></svg>
        </span>
        <span className="ml-[1px] flex h-[14px] w-[14px] items-center justify-center rounded-[2px] border border-[#888] bg-[#f4f4f4]">
          <svg width="8" height="8" viewBox="0 0 8 8" stroke="#000" strokeWidth="1.600"><path d="M.5.5l7 7M7.500.5l-7 7" /></svg>
        </span>
      </div>
      <div className="flex h-[40px] items-center pb-[5px] pl-[7px]">
        <Icon size={16}><path d="M1 8h13v15H1z" fill="#eee" stroke="#777" strokeWidth="1.500" /><path d="M6 4h13v15H6z" fill="#fff" stroke="#777" strokeWidth="1.500" /><path d="M11 12V3q2-4 4 0v11" stroke="#4b6c90" strokeWidth="1.700" /><Plus x={14} y={14} s={10} /></Icon>
        <Icon size={18} className="ml-[11px]"><path d="M0 12Q10 1 20 12q-10 8-20 0z" fill="#f5f5f5" stroke="#999" /><circle cx="10" cy="11" r="4.500" fill="#6e92b5" /><circle cx="10" cy="11" r="2" fill="#26394d" /><path d="M1 7Q10-1 19 7" stroke="#aaa" /><path d="M15 19h8l-4 4z" fill="#000" /></Icon>
        <Icon size={16} className="ml-[9px]"><path d="M2 1h20v5H2z" fill="#f6d631" stroke="#b0962a" /><path d="M2 6h20l-7 8v10H9.500V14z" fill="#6c93c4" stroke="#456a98" /></Icon>
        <Icon size={16} className="ml-[12px]"><path d="M11 3Q7 0 3 3t2 5q-5 2-2 6 4 3 9 0" stroke="#999" strokeWidth="2.300" /><path d="M10 13h13l-4 5v6h-5v-6z" fill="#c5c5c5" stroke="#aaa" /></Icon>
        <Arrow className="ml-[5px]" color="#9a9a9a" />
        <Icon size={16} className="ml-[8px]"><path d="M3 1v21M3 4h5M3 18h5M0 1h10M0 22h8" stroke="#666" strokeWidth="1.300" /><path d="M7 6h4v4H7zM7 15h4v4H7z" fill="#fff" stroke="#e49d24" strokeWidth="1.800" /><path d="M14 1h5v13h4.500L16.500 23 10 14h4z" fill="#5b86bd" stroke="#34567e" /></Icon>
        <Icon size={16} className="ml-[11px]"><path d="M3 1v21M3 4h5M3 18h5M0 1h8M0 22h10" stroke="#666" strokeWidth="1.300" /><path d="M7 6h4v4H7zM7 15h4v4H7z" fill="#fff" stroke="#e49d24" strokeWidth="1.800" /><path d="M14 23h5V10h4.500L16.500 1 10 10h4z" fill="#5b86bd" stroke="#34567e" /></Icon>
        <Icon size={16} className="ml-[10px]"><path d="M2 2h17v17H2z" fill="#f2f2f2" stroke="#777" strokeWidth="1.500" /><rect x="13" y="14" width="11" height="10" rx="2" fill="#e15050" /><path d="M15 19h7" stroke="#fff" strokeWidth="2.500" /></Icon>
      </div>
      <div className="flex h-[278px] w-[322px] flex-col rounded-[2px] border-2 border-[#4f9df2] border-l-[#2f80cd] border-t-[#2f80cd] bg-white">
        <div className="flex h-[17px] items-center pl-[4px] pt-[1px]">
          <span className="flex h-[9px] w-[9px] items-center justify-center border border-[#999] bg-white"><span className="h-px w-[5px] bg-[#444]" /></span>
          <span className="w-[9px] border-t border-dotted border-[#999]" />
          <Check />
          <Icon size={16} className="ml-[6px]"><path d="M1 8h13v14H1z" fill="#fff" stroke="#888" strokeWidth="1.500" /><path d="M6 4h14v15H6z" fill="#fff" stroke="#888" strokeWidth="1.500" /><path d="M10 13V3q3-5 5 0v12" stroke="#3f6c9c" strokeWidth="2" /></Icon>
          <span className="ml-[5px] whitespace-nowrap pt-[2px] tracking-[-0.2px] text-[#1c2340]">Hydrographie</span>
        </div>
        {LAYERS.map(([name, symbol], i) => (
          <div key={name} className="flex h-[16px] items-center pl-[29px]">
            <span className="flex h-[16px] w-[13px] flex-col">
              <span className="h-[8px] border-b border-l border-dotted border-[#999]" />
              <span className={i < LAYERS.length - 1 ? "h-[8px] border-l border-dotted border-[#999]" : "h-[8px]"} />
            </span>
            <Check />
            <svg className="ml-[6px] block shrink-0" width="16" height="16" viewBox="0 0 16 16" fill="none">{symbol}</svg>
            <span className="ml-[6px] whitespace-nowrap pt-[1px] font-bold tracking-[0.08px] text-black">{name}</span>
          </div>
        ))}
      </div>
    </div>
  );
}

/* ---------- right toolbar ---------- */

function RightToolbar() {
  return (
    <div className="flex w-[38px] shrink-0 flex-col items-center pt-[7px]">
      <Grip length={30} horizontal />
      <span className="mt-[-1px] flex h-[33px] w-[34px] shrink-0 items-center justify-center rounded-[3px] border border-[#a2a2a2] bg-[#d9d9d9]">
        <Icon><path d="M8 15l3 2V6q1.500-3 3 0v6q5-1 6 2l-1 6-2 3h-6l-6-8q1-2 3 0z" fill="#fff" stroke="#555" strokeWidth="1.100" /><path d="M9 4l5-2M5 12l6-4M14 12v3M17 12.500V15" stroke="#666" /><circle cx="12.500" cy="4.500" r="1.500" fill="#ddd" stroke="#666" /></Icon>
      </span>
      <div className="flex flex-col items-center gap-[10.100px] pt-[5px]">
        <Icon><path d="M7 14V5q1.500-2 2.500 0V10 2.500q1.500-2 3 0V10 3.500q1.500-2 3 0V10 5.500q2-2 3 0V16q0 4-3 7H9q-5-5-6.500-10 1.500-2.500 4.500 1z" fill="#fff" stroke="#333" strokeWidth="1.200" /></Icon>
        <Icon><path d="M3 2h14v14H3z" fill="#fbe34c" stroke="#c6a51c" /><path d="M11 1l4 4h-2.500V8h-3V5H7zM11 23l4-4h-2.500V16h-3v3H7zM1 12l4-4v2.500H8v3H5V16zM22 12l-4-4v2.500H15v3h3V16z" fill="#6390c6" stroke="#35577e" strokeWidth=".8" /></Icon>
        <Icon><Lens /><path d="M15 3.500v11M9.500 9h11" stroke="#5181b8" strokeWidth="3" /></Icon>
        <Icon><Lens /><path d="M9.500 9h11" stroke="#5181b8" strokeWidth="3" /></Icon>
        <Icon><Lens grey /><text x="9" y="12.500" fill="#8a8a8a" className="font-['DejaVu_Sans_Condensed','DejaVu_Sans',sans-serif] text-[9px] font-bold" textLength="12">1:1</text></Icon>
        <Icon><path d="M3 1h8L9 3.500l3 3-3 3-3-3L3 9zM23 1h-8l2.500 2.500-2.500 3 3 3 2.500-3L23 9zM23 21h-8l2.500-2.500-3-3 3-3 3 3L23 13z" fill="#6390c6" stroke="#35577e" strokeWidth=".7" /><path d="M9.500 15.500L2.500 22.500" stroke="#5b4a17" strokeWidth="4" /><path d="M8.500 16.500L3 22" stroke="#eab92e" strokeWidth="2.500" /><circle cx="14" cy="10.500" r="6" fill="#e9eef0" fillOpacity=".85" stroke="#aaa" /></Icon>
        <Icon><path d="M1.500 2.500h13v14h-13z" fill="#fbe34c" stroke="#c6a51c" /><Lens /><path d="M8.500 5.500L14.500 3v11l-4 1q-5-5-2-9.500z" fill="#eee49a" /></Icon>
        <Icon><path d="M1.500 2.500h13v14h-13z" fill="#eee" stroke="#bbb" /><Lens grey /></Icon>
      </div>
      <MoreDown className="mt-[13px]" />
    </div>
  );
}

/* ---------- status bar ---------- */

function StatusBar() {
  return (
    <div className="relative flex h-[31px] items-center pl-[198px] text-black">
      <span className="w-[62px] whitespace-nowrap pt-[2px] tracking-[-0.1px]">Coordonnée</span>
      <span className="ml-[1px] flex h-[20px] w-[252px] items-center justify-center rounded-[2px] border border-[#b0b0b0] bg-white pt-[2px]">-1.816,0.795</span>
      <span className="flex h-[25px] w-[20px] items-center justify-center rounded-[3px] border border-[#8d8d8d] bg-[#e2e2e2]">
        <svg width="16" height="18" viewBox="0 0 16 18" fill="none" stroke="#222"><rect x="2" y="2" width="6.500" height="10" rx="3" fill="#999" strokeWidth="1.500" transform="rotate(-20 5 7)" /><rect x="7" y="7" width="7" height="9" rx="3" fill="#ccc" strokeWidth="1.500" transform="rotate(-20 10 11)" /><path d="M2 6l6-2M7 12l6-3M1 15l6-4M9 5l5-3" strokeWidth="1" /></svg>
      </span>
      <span className="ml-[8px] w-[46px] pt-[2px] tracking-[-0.3px]">Échelle</span>
      <span className="flex h-[20px] w-[86px] items-center rounded-[2px] border border-[#b0b0b0] bg-white pl-[4px]">
        <span className="flex-1 whitespace-nowrap pt-[2px] tracking-[-0.2px]">1:422 317</span>
        <span className="flex h-[18px] w-[15px] items-center justify-center border-l border-[#b0b0b0] bg-[#f4f4f4]"><svg width="8" height="5"><path d="M0 0h8L4 4.500z" /></svg></span>
      </span>
      <span className="ml-[9px] w-[51px] pt-[2px] tracking-[0px]">Rotation</span>
      <span className="flex h-[25px] w-[98px] items-center rounded-[2px] border border-[#b0b0b0] bg-white pl-[3px]">
        <span className="flex-1 pt-[2px]">0.0</span>
        <span className="flex h-[23px] w-[15px] flex-col border-l border-[#b0b0b0] bg-[#f4f4f4]">
          <span className="flex flex-1 items-center justify-center border-b border-[#b0b0b0]"><svg width="7" height="4"><path d="M0 4h7L3.500 0z" /></svg></span>
          <span className="flex flex-1 items-center justify-center"><svg width="7" height="4"><path d="M0 0h7L3.500 4z" /></svg></span>
        </span>
      </span>
      <span className="ml-[6px] flex"><Check /></span>
      <span className="ml-[4px] w-[48px] pt-[1px] tracking-[-0.1px]">Rendu</span>
      <Icon size={18} className="ml-[1px]"><circle cx="12" cy="12" r="9" fill="#a7a7a7" stroke="#888" strokeWidth="2" /><circle cx="12" cy="12" r="4.500" fill="#ddd" stroke="#888" /><path d="M12 1v7M12 16v7M1 12h7M16 12h7" stroke="#888" strokeWidth="2" /></Icon>
      <span className="ml-[2px] w-[76px] pt-[2px] tracking-[-0.2px]">EPSG:3948</span>
      <Icon size={17} className="ml-[-1px]"><path d="M12 1q11 0 11 9t-6 9l5 5q-7 0-10-4.500Q1 19 1 10t11-9z" fill="#5e5e5e" /><circle cx="7" cy="10" r="1.700" fill="#fff" /><circle cx="12" cy="10" r="1.700" fill="#fff" /><circle cx="17" cy="10" r="1.700" fill="#fff" /></Icon>
      <svg className="absolute bottom-0 right-0" width="12" height="12" fill="none" stroke="#999"><path d="M0 12L12 0M4 12l8-8M8 12l4-4" /></svg>
    </div>
  );
}

/* ---------- window ---------- */

const MENUS = [
  ["w-[44px]", "", "P", "rojet"],
  ["w-[44px]", "", "É", "diter"],
  ["w-[32px]", "V", "u", "e"],
  ["w-[51px]", "", "C", "ouche"],
  ["w-[73px]", "", "P", "références"],
  ["w-[62px]", "E", "x", "tension"],
  ["w-[51px]", "", "V", "ecteur"],
  ["w-[47px]", "", "R", "aster"],
  ["w-[97px]", "", "B", "ase de données"],
  ["w-[55px]", "", "I", "nternet"],
  ["w-[66px]", "", "T", "raitement"],
  ["w-[36px]", "", "A", "ide"],
  ["w-[40px]", "", "B", "DD67"],
];

export default function App() {
  return (
    <div className="flex h-[538px] w-[1052px] flex-col overflow-hidden border border-[#3390ee] bg-[#efefef] font-['DejaVu_Sans_Condensed','DejaVu_Sans',sans-serif] text-[11px] leading-[14px] text-[#111]">
      <header className="flex h-[31px] items-center bg-white pl-[8px] text-black">
        <svg width="16" height="18" viewBox="0 0 16 18" fill="none"><path d="M8 2Q2 3 2 9q1 5 6 5 3 3 6 1l-3-3q4-5 1-9z" fill="#d9e24b" stroke="#b9c53c" /><path d="M7 7l2 4" stroke="#fff" strokeWidth="2" /><path d="M14 0L5 14l-4 3 1-4z" fill="#1f7a3a" /></svg>
        <span className="ml-[5px] whitespace-nowrap font-['Open_Sans',sans-serif] text-[12px] tracking-[-0.4px]">QGIS 2.14.10-Essen - MAP_Carto_BDTOPO_2-2_012</span>
        <svg className="ml-auto mr-[17px]" width="102" height="12" viewBox="0 0 102 12" fill="none" stroke="#000" shapeRendering="crispEdges"><path d="M0 6.500h10M45.500 1.500h9v9h-9z" /><path d="M91 1l10 10M101 1L91 11" shapeRendering="auto" /></svg>
      </header>
      <nav className="flex h-[21px] items-center pl-[9px] pt-[2px]">
        {MENUS.map(([width, before, key, after], i) => (
          <span key={i} className={"whitespace-nowrap tracking-[-0.2px] " + width}>{before}<span className="underline underline-offset-2">{key}</span>{after}</span>
        ))}
      </nav>
      <FileToolbar />
      <EditToolbar />
      <PluginToolbar />
      <div className="flex h-[337px] border-t border-[#b8b8b8] shadow-[inset_0_1px_0_#fff]">
        <LeftToolbar />
        <LayersPanel />
        <div className="flex w-[6px] shrink-0 items-center overflow-hidden pl-[2px]"><Grip length={110} /></div>
        <div className="mt-[1px] h-[335px] w-[629px] shrink-0 overflow-hidden border-2 border-[#b5b5b5] bg-white"><MapCanvas /></div>
        <RightToolbar />
      </div>
      <StatusBar />
    </div>
  );
}
